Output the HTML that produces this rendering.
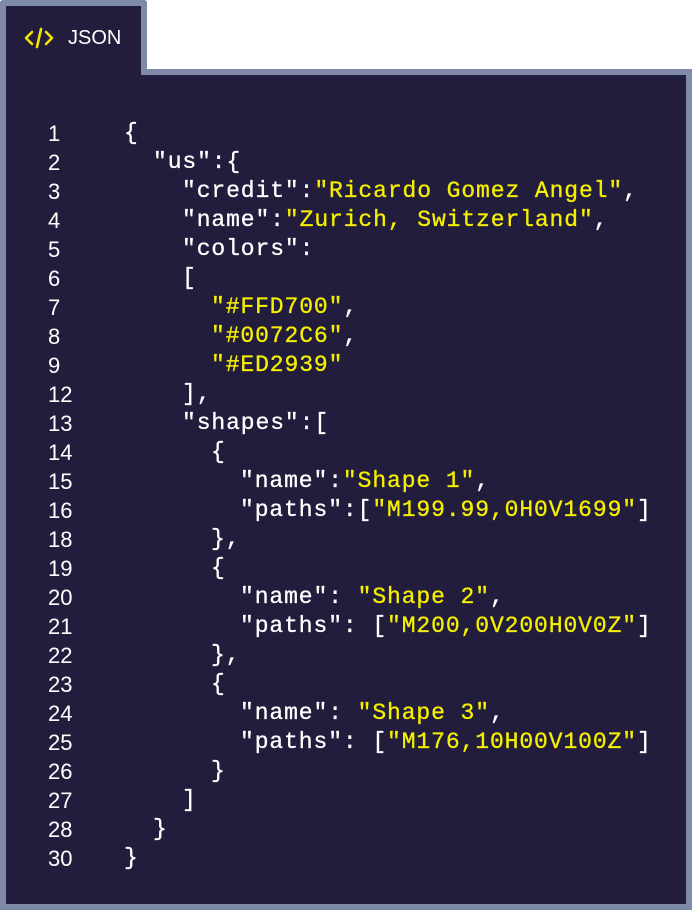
<!DOCTYPE html>
<html><head><style>
body{margin:0;width:692px;height:910px;background:#fff;position:relative;overflow:hidden;font-family:"Liberation Sans",sans-serif}
.tab{position:absolute;left:0;top:0;height:75px;background:#231d3d;border:6px solid #7f89a8;border-bottom:none;box-sizing:border-box;width:147px;border-radius:3px 3px 0 0}
.body{position:absolute;left:0;top:69px;width:692px;height:841px;background:#231d3d;border:6px solid #7f89a8;box-sizing:border-box}
.cover{position:absolute;left:6px;top:60px;width:135px;height:30px;background:#231d3d}
.ttl{position:absolute;left:68px;top:27px;color:#fff;font-size:20px}
.icon{position:absolute;left:24px;top:26px}
.ln{position:absolute;left:48px;color:#fff;font-size:22px;line-height:29px}
.c{position:absolute;color:#fff;font-family:"Liberation Mono",monospace;font-size:23px;letter-spacing:0.9px;line-height:29px;white-space:pre;-webkit-text-stroke:0.3px currentColor}
.y{color:#f5f000}
</style></head><body>
<div class="body"></div>
<div class="tab"></div>
<div class="cover"></div>
<svg class="icon" width="30" height="24" viewBox="0 0 30 24"><g fill="none" stroke="#f5e600" stroke-width="2.6" stroke-linecap="round" stroke-linejoin="round"><path d="M8 6L2 12l6 6"/><path d="M22 6l6 6-6 6"/><path d="M17 3l-4 18"/></g></svg>
<div class="ttl">JSON</div>
<div id="c"></div>
<script>
var L=[[1,0,'{'],[2,1,'"us":{'],[3,2,'"credit":<y>"Ricardo Gomez Angel"</y>,'],[4,2,'"name":<y>"Zurich, Switzerland"</y>,'],[5,2,'"colors":'],[6,2,'['],[7,3,'<y>"#FFD700"</y>,'],[8,3,'<y>"#0072C6"</y>,'],[9,3,'<y>"#ED2939"</y>'],[12,2,'],'],[13,2,'"shapes":['],[14,3,'{'],[15,4,'"name":<y>"Shape 1"</y>,'],[16,4,'"paths":[<y>"M199.99,0H0V1699"</y>]'],[18,3,'},'],[19,3,'{'],[20,4,'"name": <y>"Shape 2"</y>,'],[21,4,'"paths": [<y>"M200,0V200H0V0Z"</y>]'],[22,3,'},'],[23,3,'{'],[24,4,'"name": <y>"Shape 3"</y>,'],[25,4,'"paths": [<y>"M176,10H00V100Z"</y>]'],[26,3,'}'],[27,2,']'],[28,1,'}'],[30,0,'}']];
var X=[124,153,182,211,240],h='';
L.forEach(function(r,i){var t=119+i*29;h+='<div class="ln" style="top:'+t+'px">'+r[0]+'</div><div class="c" style="left:'+X[r[1]]+'px;top:'+t+'px">'+r[2].replace(/<y>/g,'<span class="y">').replace(/<\/y>/g,'</span>')+'</div>';});
document.getElementById('c').innerHTML=h;
</script>
</body></html>
